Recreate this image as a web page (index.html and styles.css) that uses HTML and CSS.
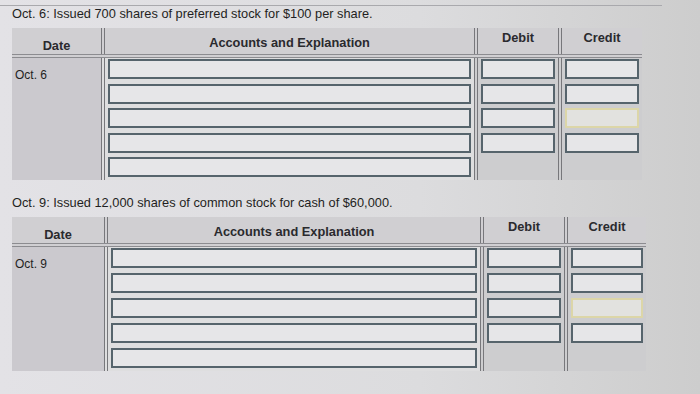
FILE: index.html
```html
<!DOCTYPE html>
<html lang="en">
<head>
    <meta charset="UTF-8">
    <meta name="viewport" content="width=device-width, initial-scale=1.0">
    <title>Journal Entries</title>
    <link rel="stylesheet" href="styles.css">
</head>
<body>
    <div class="page">
        <section class="entry first">
            <p class="prompt">Oct. 6: Issued 700 shares of preferred stock for $100 per share.</p>
            <div class="journal">
                <div class="head">
                    <div class="th date-th">Date</div>
                    <div class="th acct-th">Accounts and Explanation</div>
                    <div class="th amt-th">Debit</div>
                    <div class="th amt-th">Credit</div>
                </div>
                <div class="rows">
                    <div class="date">Oct. 6</div>
                    <div class="col acct">
                        <input type="text" class="field">
                        <input type="text" class="field">
                        <input type="text" class="field">
                        <input type="text" class="field">
                        <input type="text" class="field">
                    </div>
                    <div class="col amt">
                        <input type="text" class="field">
                        <input type="text" class="field">
                        <input type="text" class="field">
                        <input type="text" class="field">
                    </div>
                    <div class="col amt">
                        <input type="text" class="field">
                        <input type="text" class="field">
                        <input type="text" class="field focus">
                        <input type="text" class="field">
                    </div>
                </div>
            </div>
        </section>

        <section class="entry second">
            <p class="prompt">Oct. 9: Issued 12,000 shares of common stock for cash of $60,000.</p>
            <div class="journal">
                <div class="head">
                    <div class="th date-th">Date</div>
                    <div class="th acct-th">Accounts and Explanation</div>
                    <div class="th amt-th">Debit</div>
                    <div class="th amt-th">Credit</div>
                </div>
                <div class="rows">
                    <div class="date">Oct. 9</div>
                    <div class="col acct">
                        <input type="text" class="field">
                        <input type="text" class="field">
                        <input type="text" class="field">
                        <input type="text" class="field">
                        <input type="text" class="field">
                    </div>
                    <div class="col amt">
                        <input type="text" class="field">
                        <input type="text" class="field">
                        <input type="text" class="field">
                        <input type="text" class="field">
                    </div>
                    <div class="col amt">
                        <input type="text" class="field">
                        <input type="text" class="field">
                        <input type="text" class="field focus">
                        <input type="text" class="field">
                    </div>
                </div>
            </div>
        </section>
    </div>
</body>
</html>
```
FILE: styles.css
```css
body {
    margin: 0;
    font-family: "Liberation Sans", Arial, sans-serif;
    color: #1f1f22;
    background: linear-gradient(90deg, #e3e2e6 0%, #dcdcde 60%, #cdcdcd 100%);
    height: 394px;
    overflow: hidden;
}
.page {
    padding: 5px 0 0 12px;
}
.entry.first {
    border-top: 1px solid #a9a9ad;
    margin-left: -12px;
    padding-left: 12px;
    width: 650px;
}
.entry.second {
    margin-top: 15px;
}
.prompt {
    margin: 0;
    font-size: 12.8px;
    line-height: 16px;
    height: 22px;
}
.journal {
    width: 630px;
}
.second .journal {
    width: 634px;
}
.head,
.rows {
    display: grid;
    grid-template-columns: 89px 1fr 84px 84px;
}
.second .head,
.second .rows {
    grid-template-columns: 92px 1fr 84px 82px;
}
.head {
    background: #d0cfd2;
    height: 26px;
    border-bottom: 4px double #8c8c90;
}
.th {
    display: flex;
    align-items: center;
    justify-content: center;
    font-size: 12.8px;
    font-weight: bold;
    color: #2a2a2e;
}
.date-th {
    padding-top: 8px;
}
.acct-th {
    padding-top: 2px;
}
.amt-th {
    padding-bottom: 8px;
}
.th + .th,
.col {
    border-left: 4px double #77777b;
}
.date {
    background: #cbc9ce;
    font-size: 12px;
    padding: 10px 0 0 3px;
}
.col {
    display: flex;
    flex-direction: column;
    gap: 4.5px;
    padding: 1px 3px 3px 3px;
}
.second .col {
    gap: 5px;
}
.amt {
    background: #cdcdcf;
}
.acct {
    background: #dededf;
}
.field {
    box-sizing: border-box;
    height: 20px;
    width: 100%;
    margin: 0;
    border: 2px solid #56646c;
    background: #e6e6e8;
    font: inherit;
}
.field.focus {
    border-color: #dcd6a8;
    background: #e2e2df;
}
```
